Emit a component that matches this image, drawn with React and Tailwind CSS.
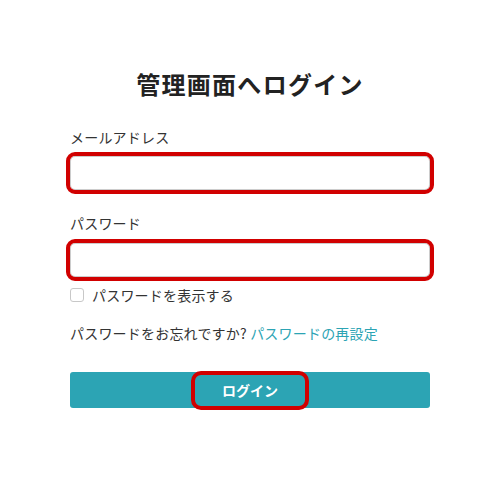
import { useState } from "react";

export default function App() {
    const [email, setEmail] = useState("");
    const [password, setPassword] = useState("");
    const [show, setShow] = useState(false);

    return (
        <div className="min-h-screen bg-white font-['Noto_Sans_CJK_JP',sans-serif] text-[#333]">
            <div className="w-[360px] mx-[70px] pt-[68px]">
                <h1 className="text-2xl leading-8 font-bold text-center text-[#222] tracking-[1.3px]">管理画面へログイン</h1>

                <form onSubmit={(e) => e.preventDefault()}>
                    <label className="block mt-[27px] text-sm leading-5 tracking-[0.2px]">メールアドレス</label>
                    <input
                        type="email"
                        value={email}
                        onChange={(e) => setEmail(e.target.value)}
                        className="block w-full h-[34px] mt-[9px] px-3 text-sm border border-[#ccc] rounded-[5px] outline-4 outline-solid outline-[#d10000]"
                    />

                    <label className="block mt-[23px] text-sm leading-5 tracking-[0.2px]">パスワード</label>
                    <input
                        type={show ? "text" : "password"}
                        value={password}
                        onChange={(e) => setPassword(e.target.value)}
                        className="block w-full h-[34px] mt-[10px] px-3 text-sm border border-[#ccc] rounded-[5px] outline-4 outline-solid outline-[#d10000]"
                    />

                    <label className="flex items-center gap-2 mt-[8px] h-5 text-sm tracking-[0.2px]">
                        <input
                            type="checkbox"
                            checked={show}
                            onChange={(e) => setShow(e.target.checked)}
                            className="appearance-none shrink-0 w-[14px] h-[14px] border border-[#c8c8c8] rounded-[3px] bg-white"
                        />
                        <span>パスワードを表示する</span>
                    </label>

                    <p className="mt-[18px] text-sm leading-5 tracking-[0.2px]">
                        パスワードをお忘れですか? <a href="#" className="text-[#2ca4b4]">パスワードの再設定</a>
                    </p>

                    <button type="submit" className="flex items-center justify-center w-full h-9 mt-[29px] bg-[#2ca4b4] rounded-[3px] text-white text-sm font-bold">
                        <span className="flex items-center justify-center w-[110px] h-[31px] rounded-[6px] outline-4 outline-solid outline-[#d10000]">ログイン</span>
                    </button>
                </form>
            </div>
        </div>
    );
}
